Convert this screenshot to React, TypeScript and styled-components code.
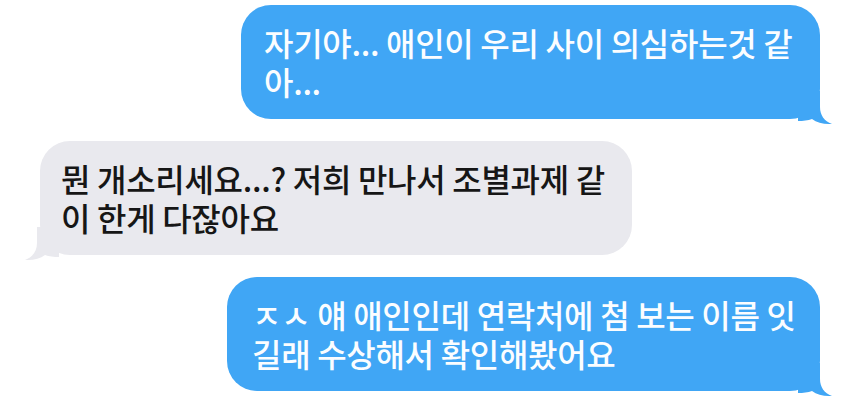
import React from 'react';
import styled, { createGlobalStyle } from 'styled-components';

const GlobalStyle = createGlobalStyle`
  html, body {
    margin: 0;
    padding: 0;
    background: #ffffff;
  }
  body {
    font-family: "Noto Sans CJK KR", "Noto Sans", sans-serif;
  }
`;

const Thread = styled.div`
  width: 854px;
  height: 409px;
  display: flex;
  flex-direction: column;
  gap: 22px;
  padding-top: 5px;
  box-sizing: border-box;
  overflow: hidden;
`;

const Row = styled.div<{ $mine?: boolean }>`
  display: flex;
  justify-content: ${(p) => (p.$mine ? 'flex-end' : 'flex-start')};
  padding: ${(p) => (p.$mine ? '0 34px 0 0' : '0 0 0 40px')};
`;

const Bubble = styled.div<{
  $mine?: boolean;
  $width: number;
  $padLeft: number;
  $padRight: number;
}>`
  position: relative;
  width: ${(p) => p.$width}px;
  height: 114px;
  box-sizing: border-box;
  padding: 18px ${(p) => p.$padRight}px 0 ${(p) => p.$padLeft}px;
  border-radius: 30px;
  background: ${(p) => (p.$mine ? '#40a6f5' : '#e9e9ee')};
  color: ${(p) => (p.$mine ? '#fbfdff' : '#161616')};
  font-size: 32px;
  line-height: 39px;
  font-weight: 500;
  letter-spacing: -0.3px;
  word-break: break-all;
`;

const Tail = styled.svg<{ $mine?: boolean }>`
  position: absolute;
  bottom: -6px;
  width: 34px;
  height: 34px;
  ${(p) => (p.$mine ? 'right: -12px;' : 'left: -15px; transform: scaleX(-1);')}
`;

function BubbleTail({ mine, color }: { mine?: boolean; color: string }) {
  return (
    <Tail $mine={mine} viewBox="0 0 34 34">
      <path
        d="M0 0 L22 0 L22 16 C22 24 26 30 34 33 C26 33.5 19 32 14 28 C10 29.5 5 30 0 30 Z"
        fill={color}
      />
    </Tail>
  );
}

export default function App() {
  return (
    <>
      <GlobalStyle />
      <Thread>
        <Row $mine>
          <Bubble $mine $width={579} $padLeft={23} $padRight={24}>
            자기야... 애인이 우리 사이 의심하는것 같아...
            <BubbleTail mine color="#40a6f5" />
          </Bubble>
        </Row>
        <Row>
          <Bubble $width={592} $padLeft={21} $padRight={22}>
            뭔 개소리세요...? 저희 만나서 조별과제 같이 한게 다잖아요
            <BubbleTail color="#e9e9ee" />
          </Bubble>
        </Row>
        <Row $mine>
          <Bubble $mine $width={593} $padLeft={25} $padRight={14}>
            ㅈㅅ 얘 애인인데 연락처에 첨 보는 이름 잇길래 수상해서 확인해봤어요
            <BubbleTail mine color="#40a6f5" />
          </Bubble>
        </Row>
      </Thread>
    </>
  );
}
